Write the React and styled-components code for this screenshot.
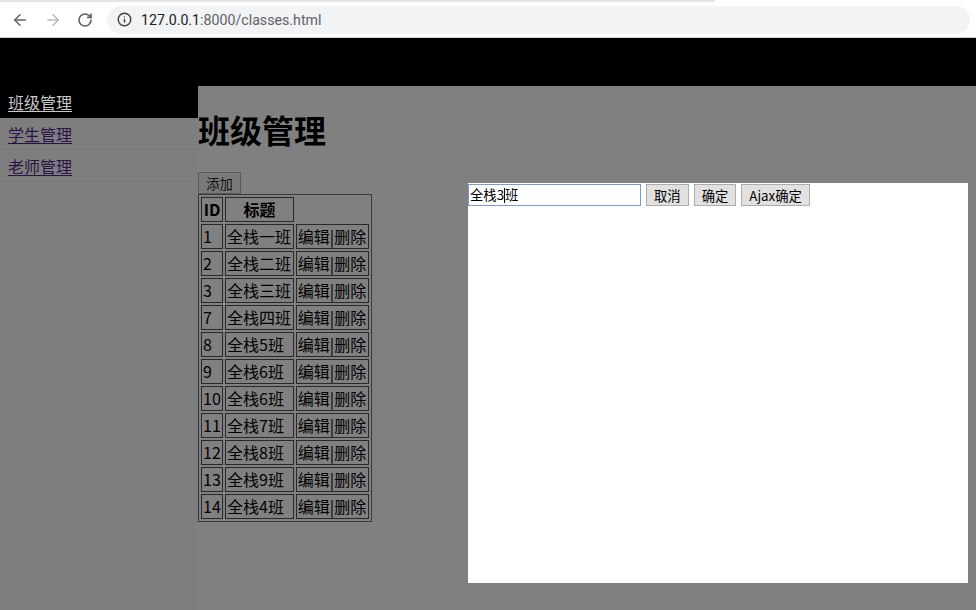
import React from "react";
import styled, { createGlobalStyle } from "styled-components";
import { ArrowLeft, ArrowRight, RotateCw, Info } from "lucide-react";

const Global = createGlobalStyle`
  html, body { margin: 0; padding: 0; height: 100%; }
  body { font-family: "Microsoft YaHei", "Noto Sans CJK SC", sans-serif; background: #808080; overflow: hidden; }
  #root { height: 100%; }
`;

const App_ = styled.div`
  position: relative;
  height: 610px;
  display: flex;
  flex-direction: column;
`;

const Chrome = styled.div`
  height: 37px;
  background: #ffffff;
  border-bottom: 1px solid #cfcfcf;
  display: flex;
  flex-direction: column;
  flex-shrink: 0;
`;

const TabEdge = styled.div`
  height: 2px;
  width: 715px;
  background: #e4e4e4;
`;

const ToolRow = styled.div`
  flex: 1;
  display: flex;
  align-items: center;
  padding: 0 6px 0 11px;
`;

const NavBtn = styled.div`
  width: 33px;
  display: flex;
  align-items: center;
  color: ${(p) => (p.$dim ? "#b9bbbe" : "#5f6368")};
`;

const Omnibox = styled.div`
  flex: 1;
  height: 28px;
  margin-left: -3px;
  border-radius: 14px;
  background: #f1f3f4;
  display: flex;
  align-items: center;
  padding-left: 10px;
  gap: 9px;
  color: #5f6368;
  font-family: Roboto, "Noto Sans", sans-serif;
  font-size: 14.2px;
`;

const Host = styled.span`
  color: #202124;
`;

const Header = styled.div`
  height: 48px;
  background: #000;
  flex-shrink: 0;
`;

const Body = styled.div`
  flex: 1;
  display: flex;
`;

const Sidebar = styled.div`
  width: 198px;
  background: #7e7e7e;
  flex-shrink: 0;
`;

const NavItem = styled.div`
  height: 31px;
  padding-left: 8px;
  display: flex;
  align-items: center;
  background: ${(p) => (p.$active ? "#000" : "transparent")};
  border-bottom: 1px solid ${(p) => (p.$active ? "#000" : "#777777")};
`;

const NavLink = styled.a`
  font-size: 16px;
  color: ${(p) => (p.$active ? "#c8c8c8" : "#2a1345")};
  text-decoration: underline;
  text-underline-offset: 2px;
`;

const Main = styled.div`
  flex: 1;
  background: #808080;
`;

const Title = styled.h1`
  margin: 22px 0 22px;
  font-size: 32px;
  line-height: 42px;
  font-weight: bold;
  color: #000;
`;

const AddRow = styled.div`
  height: 22px;
`;

const DimButton = styled.button`
  display: block;
  height: 22px;
  width: 43px;
  padding: 0;
  font-family: inherit;
  font-size: 13.33px;
  color: #111;
  background: #7a7a7a;
  border: 1px solid #5a5a5a;
  border-radius: 0;
`;

const Table = styled.table`
  border: 1px solid #3a3a3a;
  border-spacing: 2px;
  font-size: 16px;
  line-height: 21px;
  width: 174px;
  color: #000;
`;

const Cell = styled.td`
  border: 1px solid #2a2a2a;
  padding: 1px;
  white-space: nowrap;
`;

const HeadCell = styled.th`
  border: 1px solid #2a2a2a;
  padding: 1px;
  font-weight: bold;
  text-align: center;
`;

const Modal = styled.div`
  position: absolute;
  left: 468px;
  top: 183px;
  width: 500px;
  height: 400px;
  background: #fff;
  display: flex;
  align-items: flex-start;
  gap: 5px;
  padding-top: 1px;
  box-sizing: border-box;
`;

const FakeInput = styled.div`
  width: 173px;
  height: 22px;
  box-sizing: border-box;
  border: 1px solid #7b9bd0;
  font-size: 13.33px;
  line-height: 20px;
  padding-left: 1px;
  color: #000;
  display: flex;
  align-items: center;
`;

const Caret = styled.span`
  display: inline-block;
  width: 1px;
  height: 15px;
  background: #000;
`;

const ModalButton = styled.button`
  height: 22px;
  padding: 0 7px;
  font-family: inherit;
  font-size: 13.33px;
  color: #000;
  background: #e1e1e1;
  border: 1px solid #adadad;
  border-radius: 0;
`;

const rows = [
  [1, "全栈一班"],
  [2, "全栈二班"],
  [3, "全栈三班"],
  [7, "全栈四班"],
  [8, "全栈5班"],
  [9, "全栈6班"],
  [10, "全栈6班"],
  [11, "全栈7班"],
  [12, "全栈8班"],
  [13, "全栈9班"],
  [14, "全栈4班"],
];

export default function App() {
  return (
    <App_>
      <Global />
      <Chrome>
        <TabEdge />
        <ToolRow>
          <NavBtn><ArrowLeft size={18} strokeWidth={2} /></NavBtn>
          <NavBtn $dim><ArrowRight size={18} strokeWidth={2} /></NavBtn>
          <NavBtn><RotateCw size={16} strokeWidth={2.4} /></NavBtn>
          <Omnibox>
            <Info size={15} strokeWidth={2.2} color="#3c4043" />
            <span><Host>127.0.0.1</Host>:8000/classes.html</span>
          </Omnibox>
        </ToolRow>
      </Chrome>
      <Header />
      <Body>
        <Sidebar>
          <NavItem $active><NavLink $active>班级管理</NavLink></NavItem>
          <NavItem><NavLink>学生管理</NavLink></NavItem>
          <NavItem><NavLink>老师管理</NavLink></NavItem>
        </Sidebar>
        <Main>
          <Title>班级管理</Title>
          <AddRow><DimButton>添加</DimButton></AddRow>
          <Table>
            <tbody>
              <tr>
                <HeadCell>ID</HeadCell>
                <HeadCell>标题</HeadCell>
              </tr>
              {rows.map(([id, name]) => (
                <tr key={id}>
                  <Cell>{id}</Cell>
                  <Cell>{name}</Cell>
                  <Cell>编辑|删除</Cell>
                </tr>
              ))}
            </tbody>
          </Table>
        </Main>
      </Body>
      <Modal>
        <FakeInput>全栈3<Caret />班</FakeInput>
        <ModalButton>取消</ModalButton>
        <ModalButton>确定</ModalButton>
        <ModalButton>Ajax确定</ModalButton>
      </Modal>
    </App_>
  );
}
